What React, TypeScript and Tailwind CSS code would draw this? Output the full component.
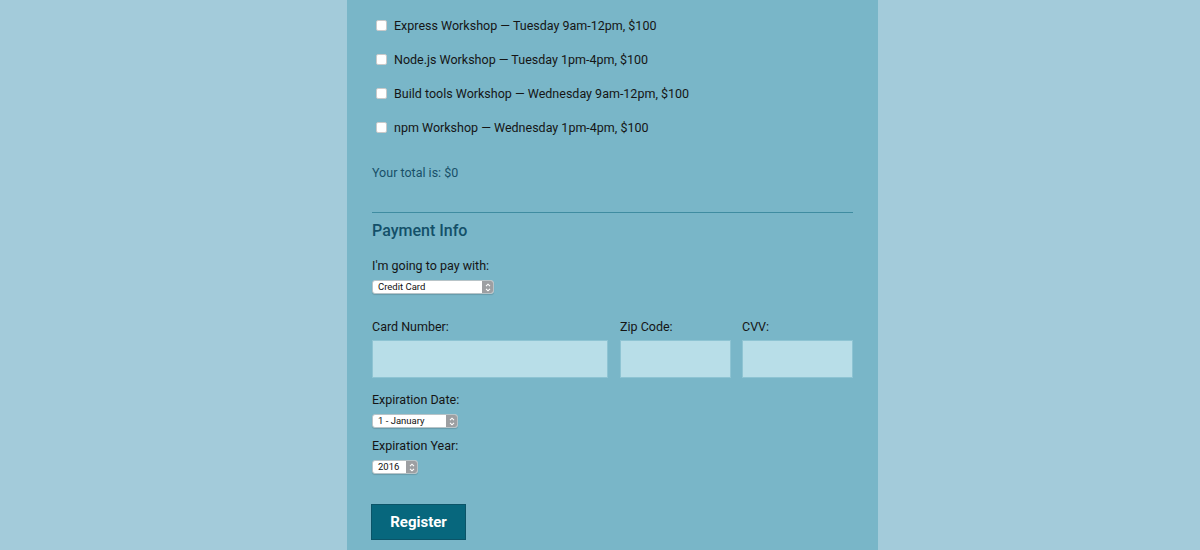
const workshops = [
  "Express Workshop — Tuesday 9am-12pm, $100",
  "Node.js Workshop — Tuesday 1pm-4pm, $100",
  "Build tools Workshop — Wednesday 9am-12pm, $100",
  "npm Workshop — Wednesday 1pm-4pm, $100",
]

function FakeSelect({ value, width }: { value: string; width: string }) {
  return (
    <div
      className={`flex h-[14px] ${width} items-stretch overflow-hidden rounded-[3px] border border-[#b8c4c8] bg-white shadow-[0_1px_1px_rgba(0,0,0,0.15)]`}
    >
      <span className="flex flex-1 items-center pl-[5px] text-[9.5px] leading-none text-[#111]">{value}</span>
      <span className="flex w-[11px] items-center justify-center bg-[#9d9fa2]">
        <svg width="6" height="9" viewBox="0 0 6 9" fill="none" stroke="#fff" strokeWidth="1.1">
          <path d="M1 3.2 L3 1.2 L5 3.2" />
          <path d="M1 5.8 L3 7.8 L5 5.8" />
        </svg>
      </span>
    </div>
  )
}

export default function App() {
  return (
    <div className="flex min-h-[550px] w-full justify-center bg-[#a3cbda] pl-[25px] font-['Roboto',sans-serif] text-[12.5px] text-[#151515]">
      <div className="h-[550px] w-[531px] overflow-hidden bg-[#79b6c8] px-[25px] pt-[8px]">
        {/* Activities */}
        <div className="flex flex-col">
          {workshops.map((w) => (
            <label key={w} className="flex h-[34px] items-center">
              <span className="ml-[4px] mr-[7px] h-[11px] w-[11px] rounded-[2px] border border-[#c9c9c9] bg-white" />
              <span className="leading-[17px]">{w}</span>
            </label>
          ))}
        </div>

        <p className="mt-[20px] leading-[17px] text-[#185068]">Your total is: $0</p>

        <div className="mt-[31px] h-px w-[481px] bg-[#3f8ca1]" />

        {/* Payment */}
        <h2 className="mt-[8px] text-[16px] font-medium leading-[20px] text-[#135069]">Payment Info</h2>

        <p className="mt-[16px] leading-[17px]">I'm going to pay with:</p>
        <div className="mt-[6px]">
          <FakeSelect value="Credit Card" width="w-[122px]" />
        </div>

        <div className="mt-[24px] flex w-[482px] gap-[11px]">
          <div className="flex w-[236px] flex-col">
            <span className="leading-[17px]">Card Number:</span>
            <div className="mt-[5px] h-[38px] border border-[#8ec4d3] bg-[#b8dee8]" />
          </div>
          <div className="ml-[1px] flex w-[111px] flex-col">
            <span className="leading-[17px]">Zip Code:</span>
            <div className="mt-[5px] h-[38px] border border-[#8ec4d3] bg-[#b8dee8]" />
          </div>
          <div className="flex w-[111px] flex-col">
            <span className="leading-[17px]">CVV:</span>
            <div className="mt-[5px] h-[38px] border border-[#8ec4d3] bg-[#b8dee8]" />
          </div>
        </div>

        <p className="mt-[13px] leading-[17px]">Expiration Date:</p>
        <div className="mt-[6px]">
          <FakeSelect value="1 - January" width="w-[86px]" />
        </div>

        <p className="mt-[9px] leading-[17px]">Expiration Year:</p>
        <div className="mt-[6px]">
          <FakeSelect value="2016" width="w-[46px]" />
        </div>

        <button className="-ml-px mt-[30px] flex h-[36px] w-[95px] items-center justify-center border border-[#0b5468] bg-[#07677d] text-[15px] font-bold text-white">
          Register
        </button>
      </div>
    </div>
  )
}
